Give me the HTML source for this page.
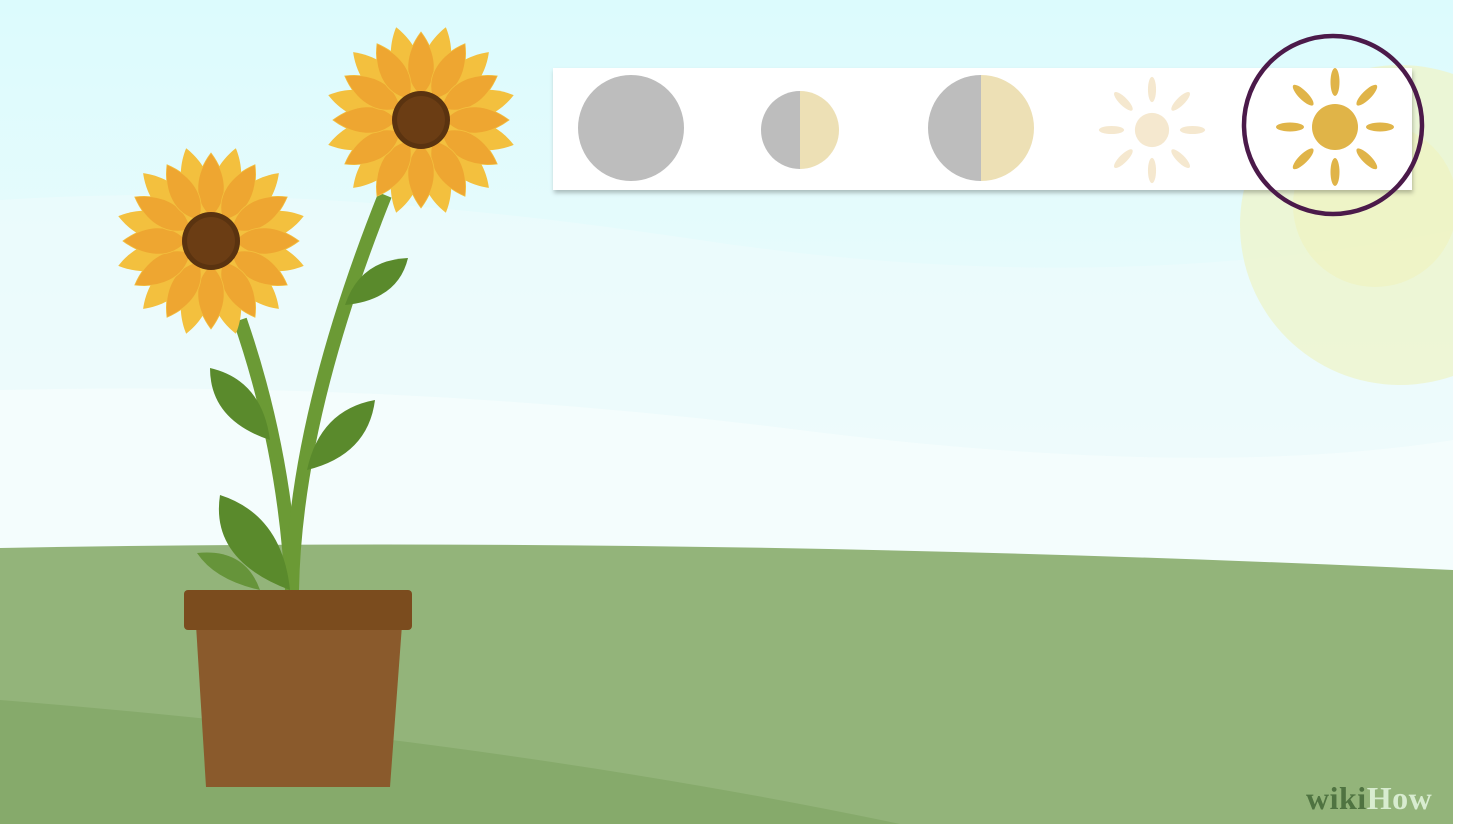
<!DOCTYPE html>
<html><head><meta charset="utf-8"><style>
html,body{margin:0;padding:0;width:1458px;height:824px;overflow:hidden;background:#fff}
svg{display:block}
.wm{position:absolute;left:1306px;top:780px;font-family:"Liberation Serif",serif;font-weight:bold;font-size:32px;letter-spacing:0.5px}
</style></head><body>
<svg width="1458" height="824" viewBox="0 0 1458 824">
<defs>
<linearGradient id="sky" x1="0" y1="0" x2="0" y2="1">
<stop offset="0" stop-color="#dcfbfd"/><stop offset="0.5" stop-color="#ecfbfc"/><stop offset="1" stop-color="#f6fcfc"/>
</linearGradient>
<clipPath id="cl"><rect width="1453" height="824"/></clipPath>
<filter id="sh" x="-5%" y="-20%" width="110%" height="150%"><feDropShadow dx="1" dy="3" stdDeviation="2" flood-color="#000" flood-opacity="0.25"/></filter>
<path id="pb" d="M0,-25 C21,-45 16,-75 0,-96 C-16,-75 -21,-45 0,-25Z" fill="#f3c03e"/>
<path id="pf" d="M0,-24 C20,-42 15,-68 0,-88 C-15,-68 -20,-42 0,-24Z" fill="#eea631" stroke="#f3c03e" stroke-width="0.8"/>
<g id="flower">
<use href="#pb" transform="rotate(15)"/><use href="#pb" transform="rotate(45)"/><use href="#pb" transform="rotate(75)"/><use href="#pb" transform="rotate(105)"/><use href="#pb" transform="rotate(135)"/><use href="#pb" transform="rotate(165)"/><use href="#pb" transform="rotate(195)"/><use href="#pb" transform="rotate(225)"/><use href="#pb" transform="rotate(255)"/><use href="#pb" transform="rotate(285)"/><use href="#pb" transform="rotate(315)"/><use href="#pb" transform="rotate(345)"/>
<use href="#pf" transform="rotate(0)"/><use href="#pf" transform="rotate(30)"/><use href="#pf" transform="rotate(60)"/><use href="#pf" transform="rotate(90)"/><use href="#pf" transform="rotate(120)"/><use href="#pf" transform="rotate(150)"/><use href="#pf" transform="rotate(180)"/><use href="#pf" transform="rotate(210)"/><use href="#pf" transform="rotate(240)"/><use href="#pf" transform="rotate(270)"/><use href="#pf" transform="rotate(300)"/><use href="#pf" transform="rotate(330)"/>
<circle r="29" fill="#5a3310"/><circle r="24" fill="#6b3d14"/>
</g>
<g id="rays">
<ellipse cx="0" cy="-45" rx="4.5" ry="14"/><ellipse cx="0" cy="-45" rx="4.5" ry="14" transform="rotate(45)"/><ellipse cx="0" cy="-45" rx="4.5" ry="14" transform="rotate(90)"/><ellipse cx="0" cy="-45" rx="4.5" ry="14" transform="rotate(135)"/><ellipse cx="0" cy="-45" rx="4.5" ry="14" transform="rotate(180)"/><ellipse cx="0" cy="-45" rx="4.5" ry="14" transform="rotate(225)"/><ellipse cx="0" cy="-45" rx="4.5" ry="14" transform="rotate(270)"/><ellipse cx="0" cy="-45" rx="4.5" ry="14" transform="rotate(315)"/>
</g>
</defs>
<g clip-path="url(#cl)">
<rect width="1453" height="824" fill="url(#sky)"/>
<path d="M0,200 Q300,180 700,240 T1453,230 L1453,824 L0,824Z" fill="#effbfc" opacity="0.6"/>
<path d="M0,390 Q400,380 800,430 T1453,440 L1453,824 L0,824Z" fill="#f6fdfd" opacity="0.7"/>
<circle cx="1400" cy="225" r="160" fill="#eef5cc" opacity="0.8"/>
<circle cx="1375" cy="205" r="82" fill="#f0f4c0" opacity="0.7"/>
<path d="M0,548 Q700,535 1453,570 L1453,824 L0,824Z" fill="#93b47a"/>
<path d="M0,700 Q500,740 900,824 L0,824Z" fill="#86aa6b"/>
</g>
<rect x="553" y="68" width="859" height="122" fill="#fff" filter="url(#sh)"/>
<circle cx="631" cy="128" r="53" fill="#bdbdbd"/>
<path d="M800,91 A39,39 0 0 0 800,169Z" fill="#bdbdbd"/><path d="M800,91 A39,39 0 0 1 800,169Z" fill="#ede0b5"/>
<path d="M981,75 A53,53 0 0 0 981,181Z" fill="#bdbdbd"/><path d="M981,75 A53,53 0 0 1 981,181Z" fill="#ede0b5"/>
<g transform="translate(1152,130) scale(0.9)" fill="#f5e8cf"><use href="#rays"/><circle r="19"/></g>
<g transform="translate(1335,127)" fill="#e0b448"><use href="#rays"/><circle r="23"/></g>
<circle cx="1333" cy="125" r="89" fill="none" stroke="#4b1a4a" stroke-width="4.5"/>
<path d="M292,590 Q285,450 240,320" fill="none" stroke="#6b9a35" stroke-width="14"/>
<path d="M292,590 Q295,420 385,195" fill="none" stroke="#6b9a35" stroke-width="14"/>
<path d="M345,305 Q360,260 408,258 Q398,300 345,305Z" fill="#5a8a2c"/>
<path d="M270,440 Q210,420 210,368 Q262,380 270,440Z" fill="#5a8a2c"/>
<path d="M307,470 Q320,410 375,400 Q368,455 307,470Z" fill="#5a8a2c"/>
<path d="M290,590 Q210,560 220,495 Q282,515 290,590Z" fill="#5a8a2c"/>
<path d="M260,590 Q215,580 197,553 Q245,548 260,590Z" fill="#66943a"/>
<use href="#flower" transform="translate(211,241)"/>
<use href="#flower" transform="translate(421,120)"/>
<path d="M196,625 L402,625 L390,787 L206,787Z" fill="#8a5a2c"/>
<rect x="184" y="590" width="228" height="40" rx="4" fill="#7b4c1e"/>
</svg>
<div class="wm"><span style="color:#4f7341">wiki</span><span style="color:#d8ecd0">How</span></div>
</body></html>
